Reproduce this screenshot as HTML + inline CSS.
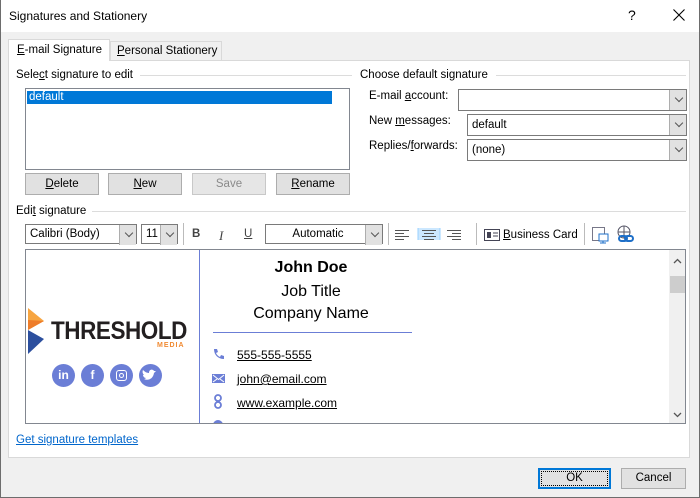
<!DOCTYPE html>
<html><head><style>
*{box-sizing:border-box;margin:0;padding:0}
body{width:700px;height:498px;background:#f0f0f0;font-family:"Liberation Sans",sans-serif;font-size:11.5px;color:#000;position:relative;overflow:hidden}
.a{position:absolute}
.win{left:0;top:0;width:700px;height:498px;border:1px solid #6d6d6d;border-top:none}
.title{left:1px;top:0;width:698px;height:32px;background:#fff}
.btn{position:absolute;background:#e1e1e1;border:1px solid #adadad;text-align:center;line-height:20px;font-size:11.5px}
.u{text-decoration:underline}
.dd{position:absolute;background:#fff;border:1px solid #7a7a7a;height:22px;line-height:20px;padding-left:4px}
.dd:after{content:"";position:absolute;right:0;top:0;width:16px;height:20px;background:#e1e1e1;border-left:1px solid #adadad}
.chev{position:absolute;right:4px;top:5px;width:6px;height:6px;border-right:1px solid #555;border-bottom:1px solid #555;transform:rotate(45deg);z-index:2}
.line{position:absolute;height:1px;background:#dcdcdc}
.lnk{text-decoration:underline;color:#000;font-size:12px}
</style></head><body>
<div class="a win"></div>
<div class="a title"></div>
<div class="a" style="left:9px;top:9px;font-size:12px">Signatures and Stationery</div>
<div class="a" style="left:628px;top:7px;font-size:14px">?</div>
<svg class="a" style="left:673px;top:9px" width="12" height="12"><path d="M0.5 0.5L11.5 11.5M11.5 0.5L0.5 11.5" stroke="#000" stroke-width="1.1"/></svg>

<!-- tabs -->
<div class="a" style="left:8px;top:39px;width:102px;height:22px;background:#fff;border:1px solid #d9d9d9;border-bottom:none;z-index:2;padding:4px 0 0 8px"><span class="u">E</span>-mail Signature</div>
<div class="a" style="left:110px;top:41px;width:112px;height:19px;background:#f0f0f0;border:1px solid #d9d9d9;border-bottom:none;padding:3px 0 0 6px"><span class="u">P</span>ersonal Stationery</div>
<div class="a" style="left:8px;top:60px;width:682px;height:398px;background:#fff;border:1px solid #d9d9d9"></div>

<div class="a" style="left:16px;top:69px">Sele<span class="u">c</span>t signature to edit</div>
<div class="line" style="left:140px;top:75px;width:212px"></div>
<div class="a" style="left:25px;top:88px;width:325px;height:82px;border:1px solid #828790;background:#fff"></div>
<div class="a" style="left:27px;top:91px;width:305px;height:13px;background:#0078d7;color:#fff;padding-left:2px;line-height:13px">default</div>

<div class="btn" style="left:25px;top:173px;width:74px;height:22px"><span class="u">D</span>elete</div>
<div class="btn" style="left:108px;top:173px;width:74px;height:22px"><span class="u">N</span>ew</div>
<div class="btn" style="left:192px;top:173px;width:74px;height:22px;color:#8a8a8a;background:#e6e6e6;border-color:#c8c8c8">Save</div>
<div class="btn" style="left:276px;top:173px;width:74px;height:22px"><span class="u">R</span>ename</div>

<div class="a" style="left:360px;top:69px">Choose default signature</div>
<div class="line" style="left:496px;top:75px;width:190px"></div>
<div class="a" style="left:369px;top:90px">E-mail <span class="u">a</span>ccount:</div>
<div class="dd" style="left:458px;top:89px;width:229px"><span class="chev"></span></div>
<div class="a" style="left:369px;top:115px">New <span class="u">m</span>essages:</div>
<div class="dd" style="left:467px;top:114px;width:220px">default<span class="chev"></span></div>
<div class="a" style="left:369px;top:140px">Replies/<span class="u">f</span>orwards:</div>
<div class="dd" style="left:467px;top:139px;width:220px">(none)<span class="chev"></span></div>

<div class="a" style="left:16px;top:205px">Edi<span class="u">t</span> signature</div>
<div class="line" style="left:92px;top:211px;width:594px"></div>
<!-- toolbar -->
<div class="dd" style="left:25px;top:224px;width:112px;height:20px;line-height:18px">Calibri (Body)<span class="chev"></span></div>
<div class="dd" style="left:141px;top:224px;width:37px;height:20px;line-height:18px">11<span class="chev"></span></div>
<div class="a" style="left:183px;top:223px;width:1px;height:22px;background:#bbb"></div>
<div class="a" style="left:192px;top:228px;font-weight:bold;color:#444">B</div>
<div class="a" style="left:219px;top:228px;font-style:italic;font-family:'Liberation Serif';font-size:13px;color:#444">I</div>
<div class="a" style="left:244px;top:228px;text-decoration:underline;color:#444">U</div>
<div class="dd" style="left:265px;top:224px;width:118px;height:20px;line-height:18px;text-align:center;padding-right:16px">Automatic<span class="chev"></span></div>
<div class="a" style="left:388px;top:223px;width:1px;height:22px;background:#bbb"></div>
<svg class="a" style="left:394px;top:228px" width="80" height="12"><g stroke="#555" stroke-width="1"><path d="M1 2.5h14M1 5.5h9M1 8.5h14M1 11.5h9"/></g><rect x="24" y="-4" width="22" height="20" fill="#cce8ff" stroke="#99d1ff"/><g stroke="#555"><path d="M28 2.5h14M30 5.5h10M28 8.5h14M30 11.5h10"/><path d="M53 2.5h14M58 5.5h9M53 8.5h14M58 11.5h9"/></g></svg>
<div class="a" style="left:476px;top:223px;width:1px;height:22px;background:#bbb"></div>
<svg class="a" style="left:484px;top:229px" width="16" height="12"><rect x="0.5" y="0.5" width="15" height="11" fill="#fff" stroke="#445"/><rect x="3" y="3" width="4" height="6" fill="#445"/><path d="M9 4h5M9 7h5" stroke="#445"/></svg>
<div class="a" style="left:503px;top:229px"><span class="u">B</span>usiness Card</div>
<div class="a" style="left:584px;top:223px;width:1px;height:22px;background:#bbb"></div>
<svg class="a" style="left:591px;top:226px" width="20" height="18"><rect x="1.5" y="1.5" width="12" height="13" fill="#fff" stroke="#778"/><rect x="8" y="8" width="9" height="7" fill="#fff" stroke="#1e6fc8"/><path d="M12 15v2M9 17h6" stroke="#1e6fc8"/></svg>
<svg class="a" style="left:616px;top:225px" width="20" height="20"><circle cx="8" cy="7" r="6" fill="none" stroke="#556"/><path d="M2 7h12M8 1v12" stroke="#556"/><rect x="3" y="11" width="8" height="5" rx="2.5" fill="none" stroke="#1e6fc8" stroke-width="2"/><rect x="9" y="11" width="8" height="5" rx="2.5" fill="none" stroke="#1e6fc8" stroke-width="2"/></svg>

<!-- editor -->
<div class="a" style="left:25px;top:249px;width:661px;height:175px;border:1px solid #828790;background:#fff;overflow:hidden">
 <div class="a" style="left:173px;top:0;width:1px;height:175px;background:#6b7ed6"></div>
 <div class="a" style="left:643px;top:0;width:17px;height:173px;background:#f0f0f0"></div>
 <div class="a" style="left:644px;top:26px;width:15px;height:17px;background:#cdcdcd"></div>
 <svg class="a" style="left:647px;top:8px" width="9" height="6"><path d="M1 5L4.5 1.5L8 5" stroke="#555" fill="none" stroke-width="1.3"/></svg>
 <svg class="a" style="left:647px;top:162px" width="9" height="6"><path d="M1 1L4.5 4.5L8 1" stroke="#555" fill="none" stroke-width="1.3"/></svg>
 <svg class="a" style="left:2px;top:58px" width="20" height="46"><path d="M0 0L16 13L0 22Z" fill="#f7a541"/><path d="M16 13L0 22L0 12Z" fill="#ee7d2a"/><path d="M0 22L16 31L0 46Z" fill="#2c4f9e"/></svg>
 <div class="a" style="left:25px;top:67px;font-size:25px;font-weight:bold;color:#231f20;letter-spacing:-0.5px;transform:scaleX(0.9);transform-origin:left">THRESHOLD</div>
 <div class="a" style="left:131px;top:92px;font-size:7px;font-weight:bold;color:#f08a32;letter-spacing:1px">MEDIA</div>
 <div class="a" style="left:26px;top:114px;width:23px;height:23px;border-radius:50%;background:#6b7ed6;color:#fff;font-weight:bold;font-size:12px;text-align:center;line-height:23px">in</div>
 <div class="a" style="left:55px;top:114px;width:23px;height:23px;border-radius:50%;background:#6b7ed6;color:#fff;font-weight:bold;font-size:12px;text-align:center;line-height:23px">f</div>
 <div class="a" style="left:84px;top:114px;width:23px;height:23px;border-radius:50%;background:#6b7ed6"><div style="position:absolute;left:6px;top:6px;width:11px;height:11px;border:1.5px solid #fff;border-radius:3px"></div><div style="position:absolute;left:9px;top:9px;width:5px;height:5px;border:1.5px solid #fff;border-radius:50%"></div></div>
 <div class="a" style="left:113px;top:114px;width:23px;height:23px;border-radius:50%;background:#6b7ed6"><svg width="23" height="23"><path d="M5 15c4 2 9 0 10-6l2-2-2 0c-1-2-5-2-5 2-3 0-5-2-6-3-1 2 0 4 1 5l-1 0c0 1 1 3 3 3-1 1-2 1-2 1z" fill="#fff"/></svg></div>
 <div class="a" style="left:174px;top:9px;width:222px;text-align:center;font-size:16px;font-weight:bold">John Doe</div>
 <div class="a" style="left:174px;top:33px;width:222px;text-align:center;font-size:16px">Job Title</div>
 <div class="a" style="left:174px;top:55px;width:222px;text-align:center;font-size:16px">Company Name</div>
 <div class="a" style="left:187px;top:82px;width:199px;height:1px;background:#6b7ed6"></div>
 <svg class="a" style="left:186px;top:98px" width="14" height="14"><path d="M2 1l3 0 1 3-2 1c1 2 2 3 4 4l1-2 3 1 0 3c-6 0-10-4-10-10z" fill="#6b7ed6"/></svg>
 <div class="a lnk" style="left:211px;top:98px">555-555-5555</div>
 <svg class="a" style="left:186px;top:124px" width="14" height="10"><rect width="13" height="9" fill="#6b7ed6"/><path d="M1 1l5.5 4.5L12 1M1 8l4-3M12 8l-4-3" stroke="#fff" fill="none"/></svg>
 <div class="a lnk" style="left:211px;top:122px">john@email.com</div>
 <svg class="a" style="left:188px;top:144px" width="10" height="16"><rect x="1" y="1" width="6" height="6" rx="3" fill="none" stroke="#6b7ed6" stroke-width="1.8"/><rect x="1" y="8" width="6" height="6" rx="3" fill="none" stroke="#6b7ed6" stroke-width="1.8"/></svg>
 <div class="a lnk" style="left:211px;top:146px">www.example.com</div>
 <div class="a" style="left:187px;top:170px;width:10px;height:10px;border-radius:50%;background:#6b7ed6"></div>
</div>
<div class="a" style="left:16px;top:434px;color:#0066cc;text-decoration:underline">Get signature templates</div>

<div class="btn" style="left:538px;top:468px;width:73px;height:21px;border:2px solid #0078d7;line-height:17px"><div style="position:absolute;inset:1px;border:1px dotted #000"></div>OK</div>
<div class="btn" style="left:621px;top:468px;width:65px;height:21px;line-height:19px">Cancel</div>
</body></html>
